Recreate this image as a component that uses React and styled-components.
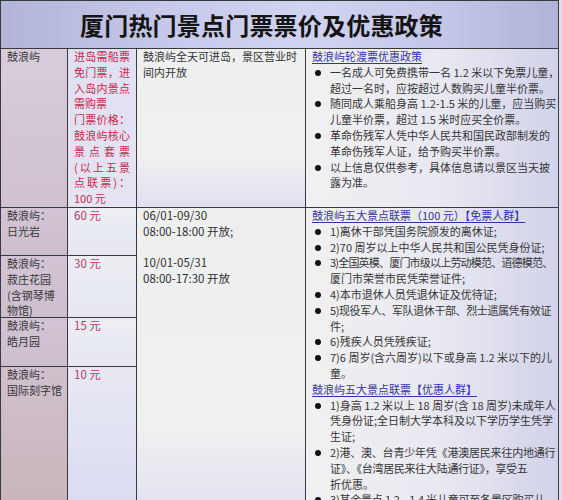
import React from 'react';
import styled, { createGlobalStyle } from 'styled-components';

const GlobalStyle = createGlobalStyle`
	html, body {
		margin: 0;
		padding: 0;
		overflow: hidden;
		background: #dedcee;
	}
	body {
		font-family: "Noto Sans CJK SC", "Liberation Sans", sans-serif;
	}
`;

const ferryPolicy = [
	['一名成人可免费携带一名 1.2 米以下免票儿童，', '超过一名时，应按超过人数购买儿童半价票。'],
	['随同成人乘船身高 1.2-1.5 米的儿童，应当购买', '儿童半价票，超过 1.5 米时应买全价票。'],
	['革命伤残军人凭中华人民共和国民政部制发的', '革命伤残军人证，给予购买半价票。'],
	['以上信息仅供参考，具体信息请以景区当天披', '露为准。'],
];

const freeGroup = [
	['1)离休干部凭国务院颁发的离休证;'],
	['2)70 周岁以上中华人民共和国公民凭身份证;'],
	['3)全国英模、厦门市级以上劳动模范、道德模范、', '厦门市荣誉市民凭荣誉证件;'],
	['4)本市退休人员凭退休证及优待证;'],
	['5)现役军人、军队退休干部、烈士遗属凭有效证', '件;'],
	['6)残疾人员凭残疾证;'],
	['7)6 周岁(含六周岁)以下或身高 1.2 米以下的儿', '童。'],
];

const discountGroup = [
	['1)身高 1.2 米以上 18 周岁(含 18 周岁)未成年人', '凭身份证;全日制大学本科及以下学历学生凭学', '生证;'],
	['2)港、澳、台青少年凭《港澳居民来往内地通行', '证》、《台湾居民来往大陆通行证》，享受五', '折优惠。'],
	['3)其余景点 1.2—1.4 米儿童可至各景区购买儿', '童票。'],
];

// lines that are wider than the cell and need squeezing
const squeeze = {
	'3)全国英模、厦门市级以上劳动模范、道德模范、': -0.8,
	'5)现役军人、军队退休干部、烈士遗属凭有效证': -0.4,
	'2)港、澳、台青少年凭《港澳居民来往内地通行': -0.2,
	'证》、《台湾居民来往大陆通行证》，享受五': -0.3,
	'3)其余景点 1.2—1.4 米儿童可至各景区购买儿': -0.2,
};

const islandTicket = [
	['进岛需船票', true],
	['免门票，进', true],
	['入岛内景点', true],
	['需购票', false],
	['门票价格：', true],
	['鼓浪屿核心', true],
	['景点套票', true],
	['(以上五景', true],
	['点联票)：', true],
	['100 元', false],
];

const sights = [
	{ name: ['鼓浪屿：', '日光岩'], price: '60 元', row: 3 },
	{ name: ['鼓浪屿：', '菽庄花园', '(含钢琴博', '物馆)'], price: '30 元', row: 4 },
	{ name: ['鼓浪屿：', '皓月园'], price: '15 元', row: 5 },
	{ name: ['鼓浪屿：', '国际刻字馆'], price: '10 元', row: 6 },
];

const PolicyList = ({ items }) => (
	<List>
		{items.map((lines, i) => (
			<Item key={i}>
				{lines.map((line, j) => (
					<Line key={j} $spacing={squeeze[line] || 0}>
						{line}
					</Line>
				))}
			</Item>
		))}
	</List>
);

const App = () => (
	<>
		<GlobalStyle />
		<Sheet>
			<Title>厦门热门景点门票票价及优惠政策</Title>

			<NameCell $row={2} $tone="top">
				鼓浪屿
			</NameCell>
			<PriceCell $row={2} $tone="top">
				{islandTicket.map(([text, spread]) => (
					<PriceLine key={text} $spread={spread}>
						{text}
					</PriceLine>
				))}
			</PriceCell>
			<HoursCell $row={2} $span={1}>
				鼓浪屿全天可进岛，景区营业时
				<br />
				间内开放
			</HoursCell>
			<PolicyCell $row={2} $span={1}>
				<PolicyTitle>鼓浪屿轮渡票优惠政策</PolicyTitle>
				<PolicyList items={ferryPolicy} />
			</PolicyCell>

			{sights.map((s) => (
				<React.Fragment key={s.price}>
					<NameCell $row={s.row} $tone={s.row === 6 ? 'bottom' : 'mid'}>
						{s.name.map((n) => (
							<div key={n}>{n}</div>
						))}
					</NameCell>
					<PriceCell $row={s.row} $tone={s.row === 6 ? 'bottom' : 'mid'}>
						<Amount>{s.price}</Amount>
					</PriceCell>
				</React.Fragment>
			))}

			<HoursCell $row={3} $span={4}>
				<Time>06/01-09/30</Time>
				<Time>08:00-18:00 开放;</Time>
				<Time>&nbsp;</Time>
				<Time>10/01-05/31</Time>
				<Time>08:00-17:30 开放</Time>
			</HoursCell>
			<PolicyCell $row={3} $span={4}>
				<PolicyTitle>
					鼓浪屿五大景点联票（100 元）<Bracket>【免票人群】</Bracket>
				</PolicyTitle>
				<PolicyList items={freeGroup} />
				<PolicyTitle>
					鼓浪屿五大景点联票<Bracket>【优惠人群】</Bracket>
				</PolicyTitle>
				<PolicyList items={discountGroup} />
			</PolicyCell>
		</Sheet>
	</>
);

const Sheet = styled.div`
	display: grid;
	grid-template-columns: 66px 68px 168px 252px;
	grid-template-rows: 47px auto 47px 61px 48px auto;
	gap: 1px;
	padding: 1px;
	width: max-content;
	background: #3a3a3e;
	color: #353535;
	font-size: 11px;
	line-height: 15.8px;
`;

const Title = styled.div`
	grid-column: 1 / -1;
	grid-row: 1;
	display: flex;
	align-items: center;
	justify-content: center;
	padding-right: 36px;
	font-size: 24px;
	font-weight: 700;
	color: #141414;
	letter-spacing: 0.2px;
	background: linear-gradient(90deg, #b2b4d8 0%, #c6c9ea 30%, #d0d3f0 55%, #c4c6e8 80%, #b0b2d6 100%);
`;

const toneBg = {
	name: {
		top: 'linear-gradient(180deg, #d8ccda 0%, #d0c2d0 100%)',
		mid: 'linear-gradient(180deg, #d2c4d4 0%, #cdbfcd 100%)',
		bottom: 'linear-gradient(180deg, #cfc0cc 0%, #c7b3ba 100%)',
	},
	price: {
		top: 'linear-gradient(180deg, #e0e0f2 0%, #e4e4f2 100%)',
		mid: 'linear-gradient(180deg, #eceef2 0%, #e6e7f2 100%)',
		bottom: 'linear-gradient(180deg, #e8e9f2 0%, #d8d8f2 100%)',
	},
};

const NameCell = styled.div`
	grid-column: 1;
	grid-row: ${(p) => p.$row};
	padding: 0 4px 0 6px;
	background: ${(p) => toneBg.name[p.$tone]};
	color: #383838;
`;

const PriceCell = styled.div`
	grid-column: 2;
	grid-row: ${(p) => p.$row};
	padding: 0 6px 0 6px;
	background: ${(p) => toneBg.price[p.$tone]};
	color: #c62a4c;
`;

const PriceLine = styled.div`
	text-align: ${(p) => (p.$spread ? 'justify' : 'left')};
	text-align-last: ${(p) => (p.$spread ? 'justify' : 'left')};
	white-space: nowrap;
`;

const Amount = styled.div`
	color: #b03a6c;
	font-size: 11.5px;
`;

const HoursCell = styled.div`
	grid-column: 3;
	grid-row: ${(p) => p.$row} / span ${(p) => p.$span};
	padding: 0 6px;
	background: linear-gradient(180deg, #eef0f0 0%, #eff0f0 70%, #e0e0f2 100%);
	color: #333;
`;

const Time = styled.div`
	font-size: 11.5px;
	color: #2e2e2e;
`;

const PolicyCell = styled.div`
	grid-column: 4;
	grid-row: ${(p) => p.$row} / span ${(p) => p.$span};
	padding: 0 0 0 6px;
	overflow: hidden;
	background: linear-gradient(90deg, #f1f1f2 0%, #e8e8f1 55%, #d2d2ea 100%);
`;

const PolicyTitle = styled.div`
	color: #3434a6;
	text-decoration: underline;
	text-underline-offset: 2px;
	white-space: nowrap;
`;

const Bracket = styled.span`
	color: #3030b8;
`;

const List = styled.ul`
	margin: 0;
	padding: 0;
	list-style: none;
`;

const Item = styled.li`
	position: relative;
	padding-left: 18px;
	&::before {
		content: '';
		position: absolute;
		left: 3px;
		top: 5px;
		width: 6px;
		height: 6px;
		border-radius: 50%;
		background: #111;
	}
`;

const Line = styled.div`
	white-space: nowrap;
	letter-spacing: ${(p) => p.$spacing}px;
`;

export default App;
